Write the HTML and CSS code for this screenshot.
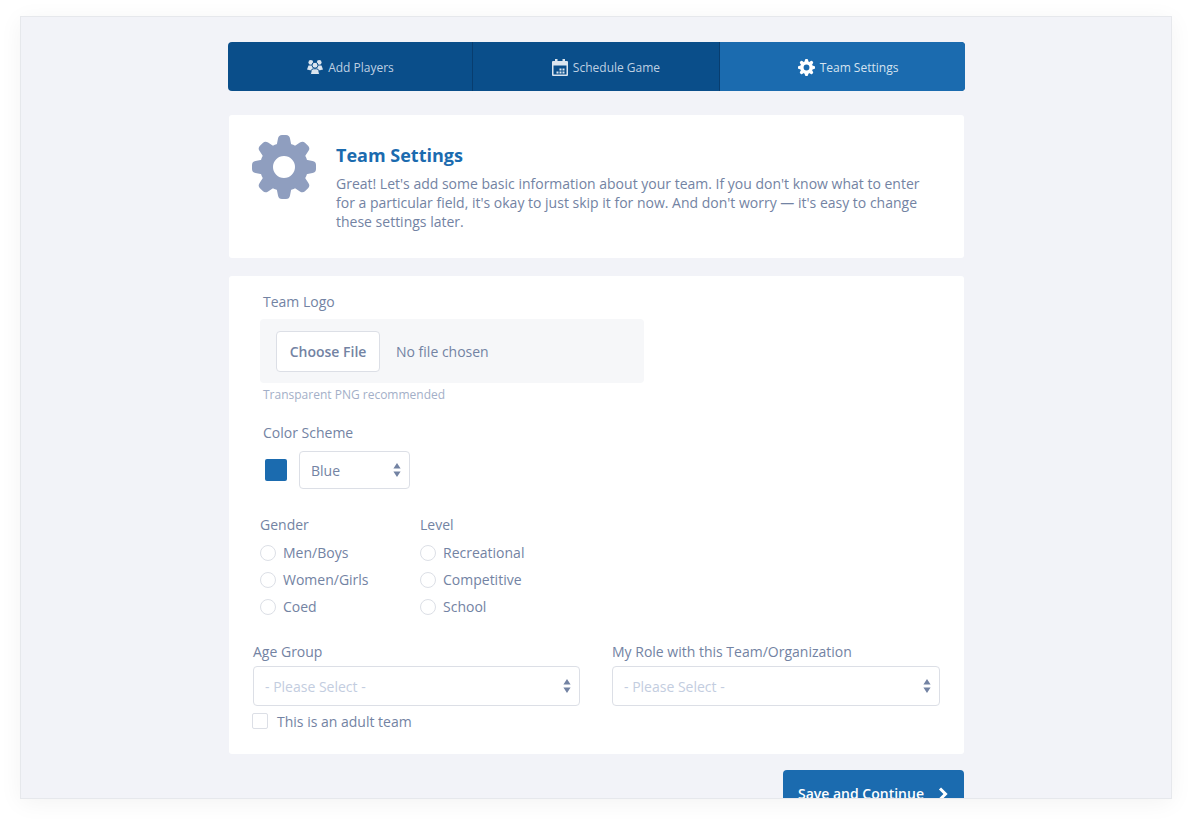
FILE: index.html
```html
<!DOCTYPE html>
<html>
<head>
  <title>Team Settings</title>
  <link rel="stylesheet" href="styles.css">
</head>
<body>
  <svg class="icon-defs" width="0" height="0">
    <defs>
      <g id="gear" fill="currentColor">
        <circle cx="32" cy="32" r="17.500" fill="none" stroke="currentColor" stroke-width="13"/>
        <path id="tooth" d="M24.500 11 L26 3.500 Q26.600 0 30 0 H34 Q37.400 0 38 3.500 L39.500 11Z"/>
        <use href="#tooth" transform="rotate(45 32 32)"/>
        <use href="#tooth" transform="rotate(90 32 32)"/>
        <use href="#tooth" transform="rotate(135 32 32)"/>
        <use href="#tooth" transform="rotate(180 32 32)"/>
        <use href="#tooth" transform="rotate(225 32 32)"/>
        <use href="#tooth" transform="rotate(270 32 32)"/>
        <use href="#tooth" transform="rotate(315 32 32)"/>
      </g>
    </defs>
  </svg>

  <div class="window">
    <div class="page">

      <div class="steps">
        <div class="step step-players">
          <svg class="step-icon" viewBox="0 0 16 16" width="16" height="16"><g fill="currentColor"><circle cx="3.800" cy="3.400" r="2.400"/><circle cx="12.200" cy="3.400" r="2.400"/><path d="M0 10.500 L1.500 6.500 L6 6.500 L8 10.500 L10 6.500 L14.500 6.500 L16 10.500 L12 11.500 L4 11.500Z"/><circle cx="8" cy="6.200" r="3" stroke="#0a4e8a" stroke-width="1"/><path d="M3.400 15.500 L4.200 11.500 Q4.800 9.800 6.500 9.800 L9.500 9.800 Q11.200 9.800 11.800 11.500 L12.600 15.500Z" stroke="#0a4e8a" stroke-width="1"/></g></svg>
          Add Players
        </div>
        <div class="step step-schedule">
          <svg class="step-icon" viewBox="0 0 16 17" width="16" height="17"><path fill="currentColor" fill-rule="evenodd" d="M3 0h2.500v2h5V0H13v2h2a1 1 0 0 1 1 1v13a1 1 0 0 1-1 1H1a1 1 0 0 1-1-1V3a1 1 0 0 1 1-1h2zM1.500 6.500v9h13v-9zM7.500 9.500h2v2h-2zM10.500 9.500h2v2h-2zM7.500 12.500h2v2h-2zM10.500 12.500h2v2h-2zM4.500 12.500h2v2h-2z"/></svg>
          Schedule Game
        </div>
        <div class="step step-active">
          <svg class="step-icon" viewBox="0 0 64 64" width="17" height="17"><use href="#gear"/></svg>
          Team Settings
        </div>
      </div>

      <div class="card intro">
        <svg class="intro-icon" viewBox="0 0 64 64" width="64" height="64"><use href="#gear"/></svg>
        <div class="intro-text">
          <h1 class="intro-title">Team Settings</h1>
          <p class="intro-copy">Great! Let's add some basic information about your team. If you don't know what to enter for a particular field, it's okay to just skip it for now. And don't worry — it's easy to change these settings later.</p>
        </div>
      </div>

      <div class="card form">
        <div class="logo-field">
          <div class="label logo-label">Team Logo</div>
          <div class="file-box">
            <button class="file-button">Choose File</button>
            <span class="file-name">No file chosen</span>
          </div>
          <div class="hint">Transparent PNG recommended</div>
        </div>

        <div class="color-field">
          <div class="label">Color Scheme</div>
          <div class="color-row">
            <div class="swatch"></div>
            <div class="select select-small">
              <span>Blue</span>
              <svg class="arrows" viewBox="0 0 8 14" width="8" height="14"><path d="M4 0l3.600 5.500H.4zM4 14l3.600-5.500H.4z"/></svg>
            </div>
          </div>
        </div>

        <div class="radio-groups">
          <div class="radio-group">
            <div class="label">Gender</div>
            <label class="radio-row"><input type="radio" name="gender" class="radio"> Men/Boys</label>
            <label class="radio-row"><input type="radio" name="gender" class="radio"> Women/Girls</label>
            <label class="radio-row"><input type="radio" name="gender" class="radio"> Coed</label>
          </div>
          <div class="radio-group">
            <div class="label">Level</div>
            <label class="radio-row"><input type="radio" name="level" class="radio"> Recreational</label>
            <label class="radio-row"><input type="radio" name="level" class="radio"> Competitive</label>
            <label class="radio-row"><input type="radio" name="level" class="radio"> School</label>
          </div>
        </div>

        <div class="select-fields">
          <div class="select-field">
            <div class="label">Age Group</div>
            <div class="select placeholder">
              <span>- Please Select -</span>
              <svg class="arrows" viewBox="0 0 8 14" width="8" height="14"><path d="M4 0l3.600 5.500H.4zM4 14l3.600-5.500H.4z"/></svg>
            </div>
            <label class="check-row"><input type="checkbox" class="check"> This is an adult team</label>
          </div>
          <div class="select-field select-field-wide">
            <div class="label">My Role with this Team/Organization</div>
            <div class="select placeholder">
              <span>- Please Select -</span>
              <svg class="arrows" viewBox="0 0 8 14" width="8" height="14"><path d="M4 0l3.600 5.500H.4zM4 14l3.600-5.500H.4z"/></svg>
            </div>
          </div>
        </div>
      </div>

      <div class="actions">
        <button class="save-button">
          Save and Continue
          <svg viewBox="0 0 10 14" width="10" height="14"><path d="M2 1.500L7.500 7 2 12.500" fill="none" stroke="#fff" stroke-width="3"/></svg>
        </button>
      </div>

    </div>
  </div>
</body>
</html>
```

FILE: styles.css
```css
html, body
{
  margin: 0;
  height: 100%;
  background-color: #fff;
  overflow: hidden;
}

body
{
  padding: 16px 20px 0;
  box-sizing: border-box;
  font-family: "Open Sans", sans-serif;
  font-size: 14px;
  color: #7383a3;
}

.icon-defs
{
  display: block;
  height: 0;
}

.window
{
  width: 1152px;
  height: 783px;
  box-sizing: border-box;
  background-color: #f2f3f8;
  border: 1px solid #e6e8ec;
  box-shadow: 0 4px 22px rgba(0, 0, 0, 0.05);
  overflow: hidden;
}

.page
{
  width: 737px;
  margin-left: 207px;
  padding-top: 25px;
}

/* steps bar */
.steps
{
  display: flex;
  height: 49px;
  border-radius: 4px;
  overflow: hidden;
  background-color: #0a4e8a;
}

.step
{
  width: 245px;
  box-sizing: border-box;
  display: flex;
  justify-content: center;
  align-items: center;
  gap: 5px;
  padding-top: 1px;
  font-size: 12px;
  color: #bfd0e2;
  border-right: 1px solid #083d6f;
}

.step-players
{
  padding-left: 1px;
}

.step-schedule
{
  width: 247px;
  padding-left: 20px;
}

.step-icon
{
  color: #dbe5ef;
}

.step-active
{
  padding-left: 11px;
  background-color: #1b6baf;
  border-right: none;
  color: #d5e3f0;
}

.step-active .step-icon
{
  color: #fff;
}

/* cards */
.card
{
  background-color: #fff;
  border-radius: 3px;
  margin: 0 1px;
}

.intro
{
  display: flex;
  margin-top: 24px;
  height: 143px;
  box-sizing: border-box;
  padding: 20px 24px 0 23px;
}

.intro-icon
{
  color: #8f9ebf;
  flex-shrink: 0;
}

.intro-text
{
  margin-left: 20px;
  width: 590px;
}

.intro-title
{
  margin: 8px 0 0;
  font-size: 18px;
  line-height: 24px;
  font-weight: 700;
  color: #1b6baf;
}

.intro-copy
{
  margin: 7px 0 0;
  font-size: 14px;
  line-height: 19px;
}

.form
{
  margin-top: 18px;
  height: 478px;
  box-sizing: border-box;
  padding: 16px 24px 0;
}

.label
{
  font-size: 14px;
  line-height: 20px;
}

/* logo */
.logo-label
{
  margin-left: 10px;
}

.file-box
{
  display: flex;
  align-items: center;
  width: 384px;
  height: 64px;
  margin: 7px 0 0 7px;
  box-sizing: border-box;
  padding-left: 16px;
  background-color: #f6f7f9;
  border-radius: 4px;
}

.file-button
{
  width: 104px;
  height: 41px;
  background-color: #fff;
  border: 1px solid #dcdfe6;
  border-radius: 4px;
  font-family: inherit;
  font-size: 14px;
  font-weight: 600;
  color: #7383a3;
}

.file-name
{
  margin-left: 16px;
}

.hint
{
  margin: 3px 0 0 10px;
  font-size: 12px;
  line-height: 18px;
  color: #a3afc8;
}

/* color */
.color-field
{
  margin: 19px 0 0 10px;
}

.color-row
{
  display: flex;
  align-items: center;
  margin-top: 8px;
}

.swatch
{
  width: 22px;
  height: 22px;
  margin-left: 2px;
  background-color: #1b6baf;
  border-radius: 2px;
}

.select
{
  display: flex;
  justify-content: space-between;
  align-items: center;
  height: 40px;
  box-sizing: border-box;
  padding: 0 8px 0 11px;
  border: 1px solid #dcdfe6;
  border-radius: 4px;
  background-color: #fff;
}

.select-small
{
  width: 111px;
  height: 38px;
  margin-left: 12px;
}

.arrows
{
  fill: #7383a3;
}

.placeholder
{
  color: #c3cde0;
}

/* radios */
.radio-groups
{
  display: flex;
  margin: 26px 0 0 7px;
}

.radio-group
{
  width: 160px;
}

.radio-row
{
  display: flex;
  align-items: center;
  height: 27px;
  margin-top: 4px;
}

.radio-row + .radio-row
{
  margin-top: 0;
}

.radio
{
  appearance: none;
  width: 16px;
  height: 16px;
  margin: 0 7px 0 0;
  border: 1px solid #dcdfe6;
  border-radius: 50%;
  background-color: #fff;
}

/* bottom selects */
.select-fields
{
  display: flex;
  gap: 32px;
  margin-top: 22px;
}

.select-field
{
  width: 327px;
}

.select-field-wide
{
  width: 328px;
}

.select-field .select
{
  margin-top: 4px;
}

.check-row
{
  display: flex;
  align-items: center;
  margin-top: 5px;
  height: 20px;
}

.check
{
  appearance: none;
  width: 16px;
  height: 16px;
  margin: 0 9px 0 -1px;
  border: 1px solid #dcdfe6;
  border-radius: 2px;
  background-color: #fff;
}

/* save */
.actions
{
  display: flex;
  justify-content: flex-end;
  margin: 16px 1px 0 0;
}

.save-button
{
  display: flex;
  align-items: center;
  justify-content: center;
  gap: 14px;
  width: 181px;
  height: 47px;
  padding: 0 1px 0 0;
  background-color: #1b6baf;
  border: none;
  border-radius: 4px;
  font-family: inherit;
  font-size: 14px;
  font-weight: 600;
  color: #fff;
}
```
